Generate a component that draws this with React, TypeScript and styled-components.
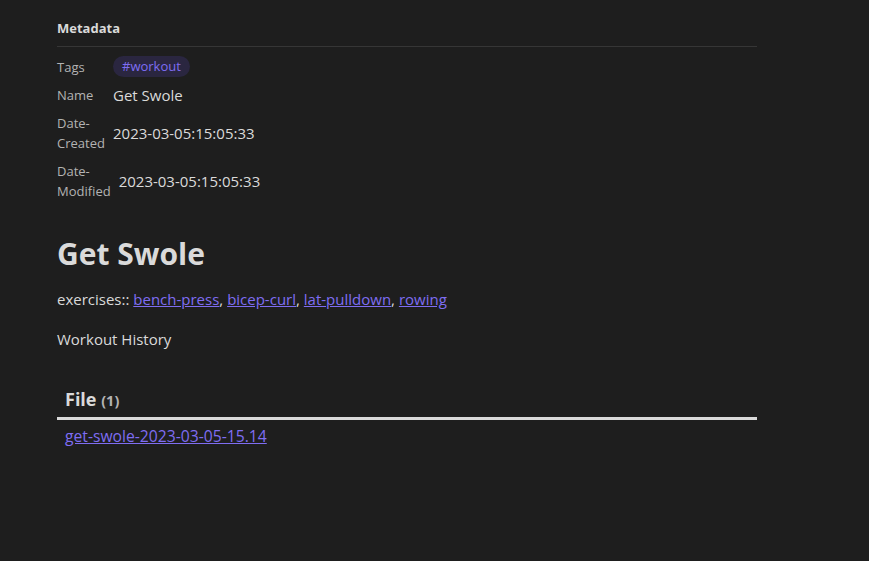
import React from "react";
import styled, { createGlobalStyle } from "styled-components";

const Global = createGlobalStyle`
  html, body { margin: 0; padding: 0; background: #1e1e1e; }
  body { font-family: "Open Sans", "Noto Sans", sans-serif; color: #dadada; }
`;

const Page = styled.div`
  width: 869px;
  min-height: 561px;
  background: #1e1e1e;
  box-sizing: border-box;
  padding: 16px 112px 0 57px;
`;

const Column = styled.div`
  width: 700px;
`;

const MetaTitle = styled.div`
  font-size: 13px;
  font-weight: 700;
  color: #dadada;
  padding: 3px 0 9px;
  border-bottom: 1px solid #363636;
`;

const MetaTable = styled.div`
  display: flex;
  flex-direction: column;
  padding-top: 5px;
`;

const MetaRow = styled.div`
  display: flex;
  align-items: center;
  padding: 4px 0;
  min-height: 20px;
`;

const Label = styled.div`
  width: min-content;
  min-width: 48px;
  margin-right: 8px;
  font-size: 13px;
  line-height: 20px;
  color: #b3b3b3;
`;

const Value = styled.div`
  font-size: 15px;
  line-height: 20px;
  color: #dadada;
`;

const Tag = styled.span`
  display: inline-block;
  background: #2a2640;
  color: #7f6df2;
  font-size: 13px;
  border-radius: 11px;
  padding: 1px 9px 2px;
  line-height: 18px;
`;

const Title = styled.h1`
  margin: 29px 0 0;
  font-size: 30px;
  font-weight: 700;
  color: #dadada;
  line-height: 40px;
`;

const Para = styled.p<{ $gap: number }>`
  margin: ${(p) => p.$gap}px 0 0;
  font-size: 15px;
  line-height: 24px;
  color: #dadada;
`;

const Link = styled.a`
  color: #7f6df2;
  text-decoration: underline;
`;

const FileSection = styled.div`
  margin-top: 36px;
`;

const FileHeader = styled.div`
  padding: 0 8px 6px;
  border-bottom: 3px solid #dadada;
  font-size: 18px;
  font-weight: 700;
  color: #dadada;
`;

const Count = styled.span`
  font-size: 14.5px;
  color: #b3b3b3;
`;

const FileLink = styled(Link)`
  display: inline-block;
  margin: 5px 0 0 8px;
  font-size: 15.7px;
`;

export default function App() {
  return (
    <>
      <Global />
      <Page>
        <Column>
          <MetaTitle>Metadata</MetaTitle>
          <MetaTable>
            <MetaRow>
              <Label>Tags</Label>
              <Tag>#workout</Tag>
            </MetaRow>
            <MetaRow>
              <Label>Name</Label>
              <Value>Get Swole</Value>
            </MetaRow>
            <MetaRow>
              <Label>Date-Created</Label>
              <Value>2023-03-05:15:05:33</Value>
            </MetaRow>
            <MetaRow>
              <Label>Date-Modified</Label>
              <Value>2023-03-05:15:05:33</Value>
            </MetaRow>
          </MetaTable>
          <Title>Get Swole</Title>
          <Para $gap={13}>
            exercises:: <Link href="#">bench-press</Link>, <Link href="#">bicep-curl</Link>,{" "}
            <Link href="#">lat-pulldown</Link>, <Link href="#">rowing</Link>
          </Para>
          <Para $gap={16}>Workout History</Para>
          <FileSection>
            <FileHeader>
              File <Count>(1)</Count>
            </FileHeader>
            <FileLink href="#">get-swole-2023-03-05-15.14</FileLink>
          </FileSection>
        </Column>
      </Page>
    </>
  );
}
